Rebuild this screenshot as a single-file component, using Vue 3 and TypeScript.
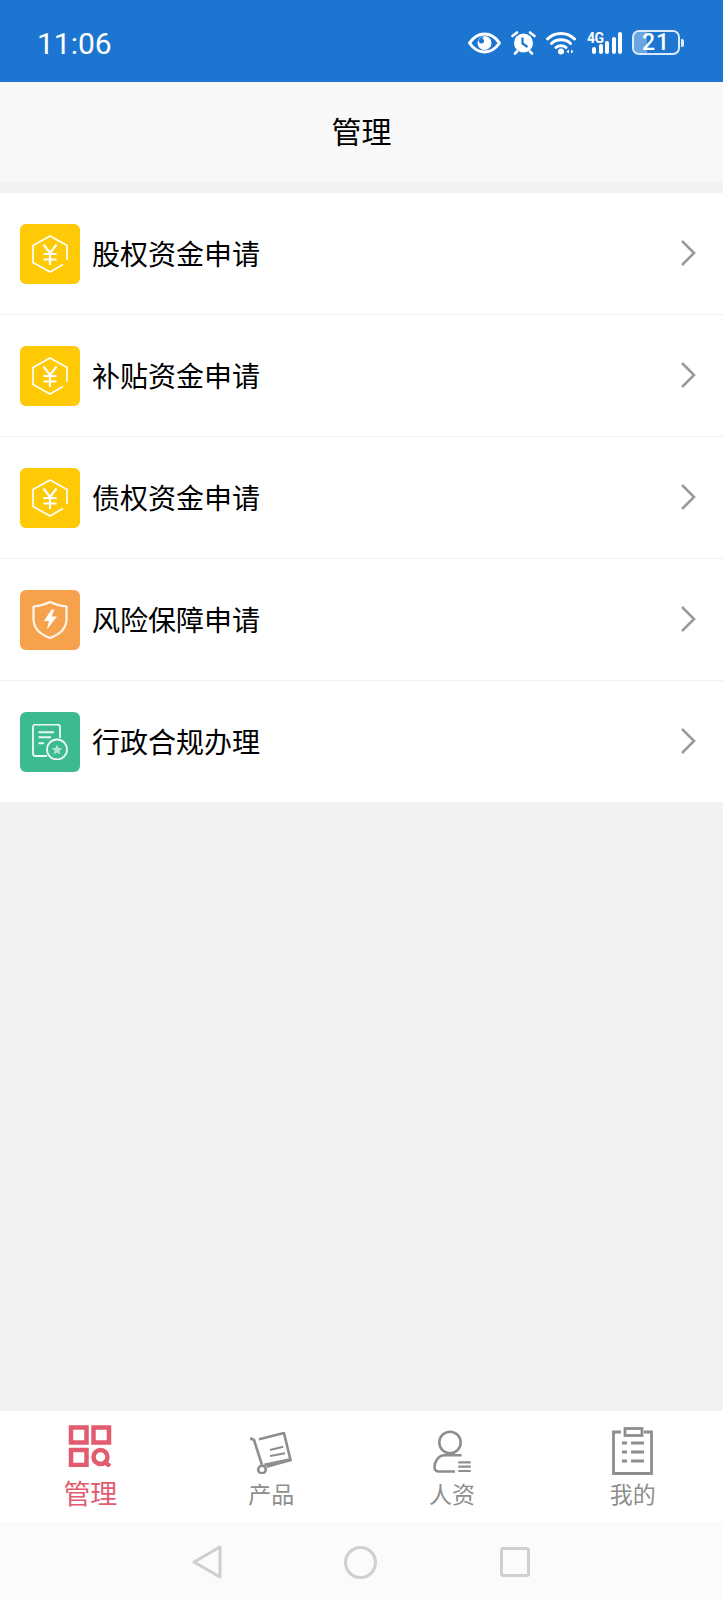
<template>
  <div class="page">
    <!-- 状态栏 -->
    <header class="status-bar">
      <span class="time">11:06</span>
      <div class="status-icons">
        <svg width="33" height="22" viewBox="0 0 33 22">
          <path d="M1.5 11C6 4.500 11 2 16.500 2S27 4.500 31.500 11C27 17.500 22 20 16.500 20S6 17.500 1.500 11Z" fill="none" stroke="#fff" stroke-width="3" stroke-linejoin="round" />
          <circle cx="16.500" cy="11" r="7" fill="#fff" />
          <path d="M10 9.500C11 6.500 13 5 16 4.500 14.500 7 13 8.500 10 9.500Z" fill="#1c75d1" />
          <circle cx="13.500" cy="9" r="2.500" fill="#1c75d1" />
        </svg>
        <svg width="25" height="25" viewBox="0 0 25 25">
          <circle cx="12.500" cy="13" r="9.500" fill="#fff" />
          <path d="M11.500 7.500V13.500l5 3.500" fill="none" stroke="#1c75d1" stroke-width="2.200" />
          <path d="M1.500 6 6 2.500M23.500 6 19 2.500M6 21.500 4 23.500M19 21.500l2 2" stroke="#fff" stroke-width="2.600" stroke-linecap="round" />
        </svg>
        <svg width="30" height="25" viewBox="0 0 30 25">
          <path d="M1.500 9C8.500 1.500 21.500 1.500 28.500 9M5.500 13.500C10.500 8.500 19.500 8.500 24.500 13.500M10 17.500C12.500 15 17.500 15 20 17.500" fill="none" stroke="#fff" stroke-width="3" stroke-linecap="round" />
          <circle cx="15" cy="21.500" r="3" fill="#fff" />
          <path d="M23 19.500v4l-2.500-2ZM25 19.500v4l2.500-2Z" fill="#fff" />
        </svg>
        <div class="signal">
          <span class="net">4G</span>
          <div class="bars">
            <i v-for="h in signalBars" :key="h" class="bar" :style="{ height: h + 'px' }"></i>
          </div>
        </div>
        <div class="battery">
          <div class="battery-body">
            <div class="battery-level"></div>
            <span class="battery-num">21</span>
          </div>
          <div class="battery-cap"></div>
        </div>
      </div>
    </header>

    <!-- 标题栏 -->
    <div class="title-bar">管理</div>

    <!-- 菜单 -->
    <ul class="menu">
      <li v-for="item in menuItems" :key="item.label" class="menu-row">
        <div class="menu-icon" :class="item.kind">
          <svg v-if="item.kind === 'money'" width="36" height="40" viewBox="0 0 36 40" fill="none" stroke="#fff">
            <path d="M35 26V11.500L18 2 1 11.500V28.500L18 38 31 30.500" stroke-width="1.700" stroke-linejoin="round" />
            <path d="M11.500 10.500 18 19l6.500-8.500M18 19V31M11.500 20h13M11.500 25.500h13" stroke-width="2.200" />
          </svg>
          <svg v-else-if="item.kind === 'risk'" width="36" height="40" viewBox="0 0 36 40" fill="none">
            <path d="M1.500 6.500C7.500 6 13 4.500 18 2 23 4.500 28.500 6 34.500 6.500V19C34.500 28.500 27.500 34.500 18 38 8.500 34.500 1.500 28.500 1.500 19Z" stroke="#fff" stroke-opacity=".9" stroke-width="2.200" stroke-linejoin="round" />
            <path d="M19.500 9.500 12 21H17L15 29.500 25 16.500H19.500L22.500 9.500Z" fill="#fff" />
          </svg>
          <svg v-else width="38" height="36" viewBox="0 0 38 36" fill="none" stroke="#fff" stroke-opacity=".9">
            <path d="M16 32H4.500A2.500 2.500 0 0 1 2 29.500V3A2.500 2.500 0 0 1 4.500 .5H26.500A2.500 2.500 0 0 1 29 3V14" stroke-width="1.800" />
            <path d="M7.500 8.200H23M7.500 13.200H20M7.500 19.200H13" stroke-width="2" />
            <circle cx="26" cy="25.500" r="10" stroke-width="1.800" />
            <path d="M26 20.500 27.500 24l3.800.3-2.900 2.400.9 3.700-3.300-2-3.300 2 .9-3.700-2.900-2.400 3.800-.3Z" fill="#fff" fill-opacity=".6" stroke="none" />
          </svg>
        </div>
        <span class="menu-label">{{ item.label }}</span>
        <svg class="chevron" width="16" height="28" viewBox="0 0 16 28">
          <path d="M2 2 14 14 2 26" fill="none" stroke="#9a9a9a" stroke-width="2.600" />
        </svg>
      </li>
    </ul>

    <div class="spacer"></div>

    <!-- 底部标签 -->
    <nav class="tab-bar">
      <div v-for="tab in tabs" :key="tab.label" class="tab" :class="{ active: tab.active }">
        <div class="icon-slot">
          <svg v-if="tab.icon === 'manage'" class="icon-manage" width="44" height="42" viewBox="0 0 44 42" fill="none" stroke="#e25c6f" stroke-width="4.500">
            <rect x="3" y="2.500" width="15.500" height="15" />
            <rect x="25.500" y="2.500" width="15.500" height="15" />
            <rect x="3" y="25" width="15.500" height="15" />
            <circle cx="32.500" cy="32" r="7" />
            <path d="M37 37.500l5 3.500" />
          </svg>
          <svg v-else-if="tab.icon === 'product'" class="icon-product" width="42" height="42" viewBox="0 0 42 42" fill="none" stroke="#8e8e8e" stroke-width="2.600">
            <path d="M0 6.300 4 8 12 33" />
            <circle cx="12" cy="37.500" r="3.800" />
            <path d="M9 7.300 34 1 40.500 28 16.700 34.700" />
            <path d="M14.500 33 41 27.500" stroke-width="3" />
            <path d="M20 18 33.300 14.700M20 24 35 21.300" stroke-width="2" />
          </svg>
          <svg v-else-if="tab.icon === 'person'" class="icon-person" width="38" height="43" viewBox="0 0 38 43" fill="none" stroke="#8e8e8e" stroke-width="2.600">
            <circle cx="17" cy="12.500" r="10.700" />
            <path d="M28.700 25.300H12C5 25.300 1.500 32 1.500 37 1.500 40 3 41.500 6 41.500H22" />
            <path d="M25.300 32.300H37.700M25.300 36.700H37.700M25.300 41H37.700" stroke-width="2.200" />
          </svg>
          <svg v-else class="icon-mine" width="41" height="48" viewBox="0 0 41 48" fill="none" stroke="#8e8e8e" stroke-width="2.800">
            <path d="M9 5H1.500V46.500H39.500V5H32" />
            <rect x="13" y="1.500" width="17" height="7" />
            <path d="M10 16h5M19 16h13M10 25h5M19 25h13M10 34h5M19 34h13" />
          </svg>
        </div>
        <span class="tab-label">{{ tab.label }}</span>
      </div>
    </nav>

    <!-- 系统导航 -->
    <div class="sys-nav">
      <svg width="30" height="34" viewBox="0 0 30 34">
        <path d="M28 2V32L2 17Z" fill="none" stroke="#cfcfcf" stroke-width="3" stroke-linejoin="round" />
      </svg>
      <svg width="33" height="33" viewBox="0 0 33 33">
        <circle cx="16.500" cy="16.500" r="15" fill="none" stroke="#cfcfcf" stroke-width="3" />
      </svg>
      <svg width="30" height="30" viewBox="0 0 30 30">
        <rect x="1.500" y="1.500" width="27" height="27" rx="1.500" fill="none" stroke="#cfcfcf" stroke-width="3" />
      </svg>
    </div>
  </div>
</template>

<script setup lang="ts">
type MenuKind = 'money' | 'risk' | 'admin'

const signalBars: number[] = [7, 10, 13, 17, 22]

const menuItems: { label: string; kind: MenuKind }[] = [
  { label: '股权资金申请', kind: 'money' },
  { label: '补贴资金申请', kind: 'money' },
  { label: '债权资金申请', kind: 'money' },
  { label: '风险保障申请', kind: 'risk' },
  { label: '行政合规办理', kind: 'admin' },
]

const tabs = [
  { label: '管理', icon: 'manage', active: true },
  { label: '产品', icon: 'product', active: false },
  { label: '人资', icon: 'person', active: false },
  { label: '我的', icon: 'mine', active: false },
]
</script>

<style>
html,
body {
  margin: 0;
  background: #f2f2f2;
}
</style>

<style scoped>
.page {
  display: flex;
  flex-direction: column;
  width: 723px;
  height: 1600px;
  background: #f2f2f2;
  font-family: 'Noto Sans CJK SC', 'Liberation Sans', sans-serif;
  overflow: hidden;
}

.status-bar {
  display: flex;
  align-items: center;
  justify-content: space-between;
  height: 82px;
  padding: 0 39px 0 37px;
  background: #1c75d1;
  color: #fff;
  flex-shrink: 0;
}

.time {
  font-family: Roboto, 'Liberation Sans', sans-serif;
  font-size: 30px;
  padding-top: 4px;
}

.status-icons {
  display: flex;
  align-items: center;
  gap: 10px;
  padding-top: 3px;
}

.signal {
  position: relative;
  display: flex;
  align-items: flex-end;
  width: 36px;
  height: 22px;
}

.net {
  position: absolute;
  left: 1px;
  top: 0;
  font-family: Roboto, 'Liberation Sans', sans-serif;
  font-size: 14px;
  font-weight: 700;
  line-height: 12px;
  letter-spacing: -0.5px;
}

.bars {
  display: flex;
  align-items: flex-end;
  gap: 2.500px;
  margin-left: 6px;
}

.bar {
  display: block;
  width: 4px;
  background: #fff;
  border-radius: 2px;
}

.battery {
  display: flex;
  align-items: center;
  gap: 1px;
}

.battery-body {
  position: relative;
  box-sizing: border-box;
  width: 48px;
  height: 25px;
  border: 2px solid #dbe9f8;
  border-radius: 7px;
  display: flex;
  align-items: center;
  justify-content: center;
  overflow: hidden;
}

.battery-level {
  position: absolute;
  left: 0;
  top: 0;
  bottom: 0;
  width: 30%;
  background: rgba(255, 255, 255, 0.35);
}

.battery-num {
  position: relative;
  font-family: Roboto, 'Liberation Sans', sans-serif;
  font-size: 23px;
  line-height: 22px;
  font-weight: 500;
  letter-spacing: 1px;
}

.battery-cap {
  width: 3px;
  height: 8px;
  background: #dbe9f8;
  border-radius: 0 2px 2px 0;
}

.title-bar {
  box-sizing: border-box;
  height: 100px;
  padding-bottom: 4px;
  display: flex;
  align-items: center;
  justify-content: center;
  background: #f8f8f8;
  color: #000;
  font-size: 30px;
  flex-shrink: 0;
}

.menu {
  list-style: none;
  margin: 11px 0 0;
  padding: 0;
  background: #fff;
  flex-shrink: 0;
}

.menu-row {
  display: flex;
  align-items: center;
  height: 121px;
  padding: 0 27px 0 20px;
  border-bottom: 1px solid #f0f0f0;
}

.menu-row:last-child {
  border-bottom: 0;
}

.menu-icon {
  display: flex;
  align-items: center;
  justify-content: center;
  width: 60px;
  height: 60px;
  border-radius: 6px;
  flex-shrink: 0;
}

.menu-icon.money {
  background: #fec905;
}

.menu-icon.risk {
  background: #f6a24c;
}

.menu-icon.admin {
  background: #3cbb92;
}

.menu-label {
  flex: 1;
  margin-left: 12px;
  padding-bottom: 2px;
  color: #000;
  font-size: 28px;
  line-height: 40px;
}

.chevron {
  margin-bottom: 2px;
}

.spacer {
  flex: 1;
}

.tab-bar {
  display: flex;
  height: 111px;
  background: #fff;
  flex-shrink: 0;
}

.tab {
  flex: 1;
  display: flex;
  flex-direction: column;
  align-items: center;
  color: #8e8e8e;
  font-size: 23px;
  line-height: 28px;
}

.tab.active {
  color: #e25c6f;
  font-size: 27px;
}

.icon-slot {
  display: flex;
  align-items: flex-end;
  height: 68px;
}

.icon-manage {
  margin-bottom: 12px;
}

.icon-product {
  margin-bottom: 5px;
}

.icon-person {
  margin-bottom: 6px;
}

.icon-mine {
  margin-bottom: 4px;
}

.sys-nav {
  display: flex;
  align-items: center;
  justify-content: center;
  gap: 122.500px;
  box-sizing: border-box;
  height: 78px;
  padding: 2px 2px 0 0;
  background: #fbfbfb;
  flex-shrink: 0;
}
</style>
